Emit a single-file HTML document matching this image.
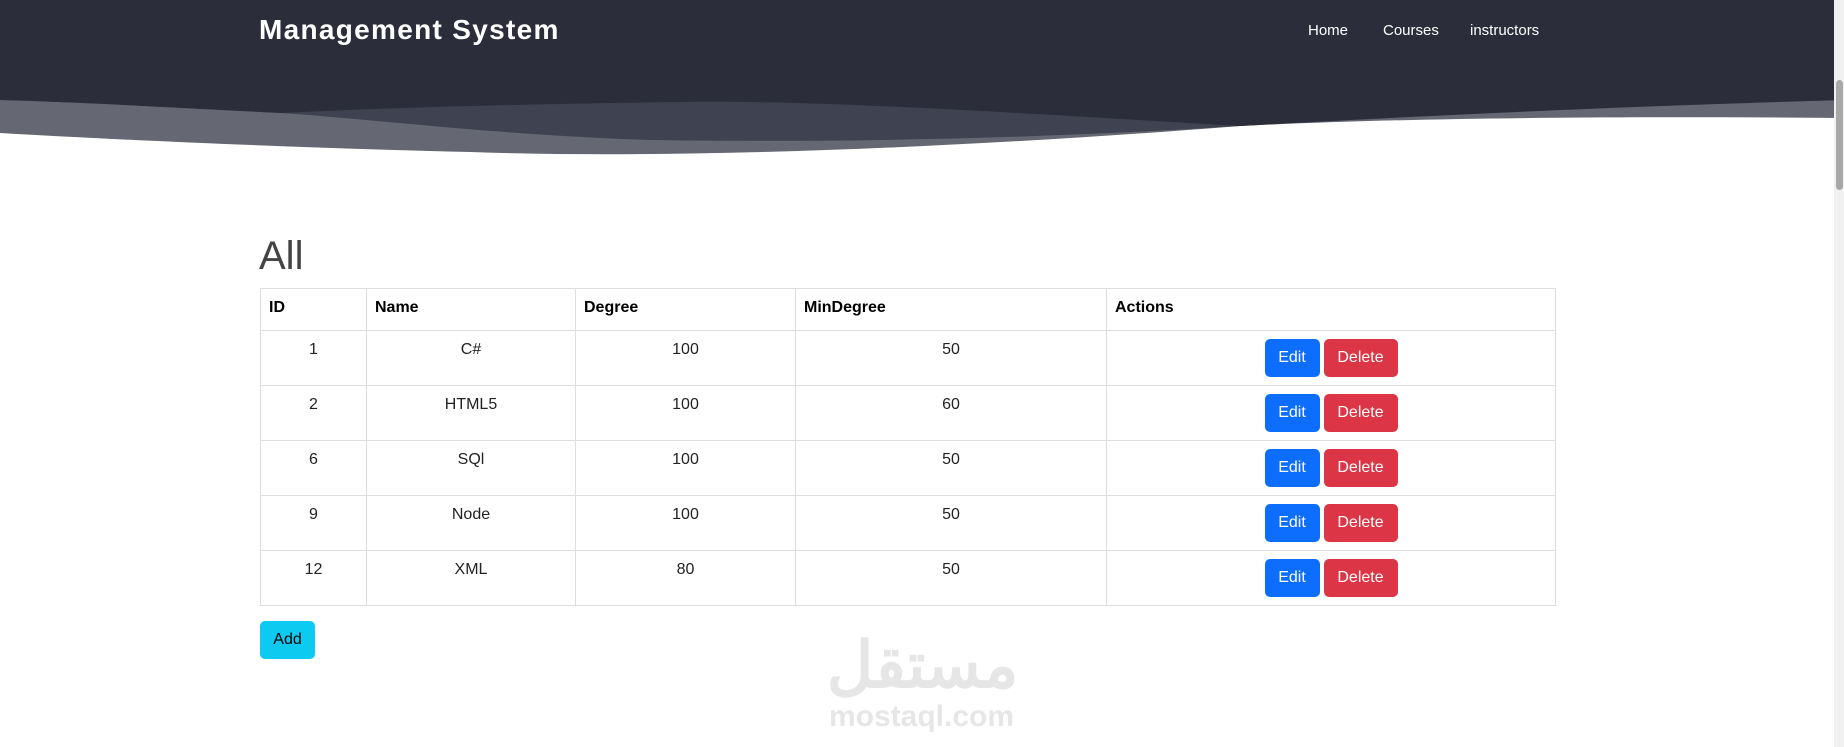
<!DOCTYPE html>
<html><head><meta charset="utf-8"><style>
*{margin:0;padding:0;box-sizing:border-box}
body{width:1844px;height:747px;overflow:hidden;background:#fff;font-family:"Liberation Sans",sans-serif;position:relative}
.abs{position:absolute}
.title{left:259px;top:14px;color:#fff;font-weight:bold;font-size:28px;letter-spacing:1.3px}
.nav{top:22px;color:#fff;font-size:15px}
table{position:absolute;left:260px;top:288px;width:1296px;border-collapse:collapse;font-size:16px;color:#222}
td,th{border:1px solid #dedede;vertical-align:top;padding:10px 8px}
th{text-align:left;font-weight:bold;height:42px;color:#000}
td{text-align:center;height:55px}
.btn{display:inline-block;color:#fff;font-size:16px;border-radius:5px;height:38px;line-height:38px;vertical-align:top}
.e{background:#0d6efd;width:55px}
.d{background:#dc3545;width:74px;margin-left:4px}
td.a{padding-top:8px;padding-bottom:0}
</style></head><body>
<svg class="abs" style="left:0;top:0" width="1844" height="160" viewBox="0 0 1844 160">
<rect width="1844" height="160" fill="#fff"/>
<path d="M0,0H1844V118C1600,116 1400,118 1240,126 C1000,145 700,160 470,152 C300,148 120,140 0,133Z" fill="#656873"/>
<path d="M0,0H1844V100C1600,106 1400,116 1240,126 C1050,138 850,143 650,140 C500,135 380,120 282,113 C180,108 80,102 0,100Z" fill="#3f4250"/>
<path d="M0,0H1844V100C1600,107 1420,116 1240,126 C1000,112 820,100 680,102 C520,104 380,108 282,113 C180,108 80,102 0,100Z" fill="#2b2d3a"/>
</svg>
<div class="abs title">Management System</div>
<div class="abs nav" style="left:1308px">Home</div>
<div class="abs nav" style="left:1383px">Courses</div>
<div class="abs nav" style="left:1470px">instructors</div>
<div class="abs" style="left:1834px;top:0;width:10px;height:747px;background:#f1f1f1"></div>
<div class="abs" style="left:1836px;top:80px;width:7px;height:110px;background:#a8a8a8;border-radius:4px"></div>
<div class="abs" style="left:259px;top:234px;font-size:40px;color:#444;font-weight:300">All</div>
<table>
<tr><th style="width:106px">ID</th><th style="width:209px">Name</th><th style="width:220px">Degree</th><th style="width:311px">MinDegree</th><th>Actions</th></tr>
<tr><td>1</td><td>C#</td><td>100</td><td>50</td><td class="a"><span class="btn e">Edit</span><span class="btn d">Delete</span></td></tr>
<tr><td>2</td><td>HTML5</td><td>100</td><td>60</td><td class="a"><span class="btn e">Edit</span><span class="btn d">Delete</span></td></tr>
<tr><td>6</td><td>SQl</td><td>100</td><td>50</td><td class="a"><span class="btn e">Edit</span><span class="btn d">Delete</span></td></tr>
<tr><td>9</td><td>Node</td><td>100</td><td>50</td><td class="a"><span class="btn e">Edit</span><span class="btn d">Delete</span></td></tr>
<tr><td>12</td><td>XML</td><td>80</td><td>50</td><td class="a"><span class="btn e">Edit</span><span class="btn d">Delete</span></td></tr>
</table>
<div class="abs" style="left:260px;top:621px;width:55px;height:38px;background:#0dcaf0;border-radius:5px;line-height:38px;text-align:center;font-size:16px;color:#000">Add</div>
<div class="abs" style="left:820px;top:630px;width:205px;text-align:center;font-family:'Liberation Sans','Noto Sans CJK SC',sans-serif;font-weight:bold;font-size:64px;color:#e6e6e6;line-height:70px">مستقل</div>
<div class="abs" style="left:825px;top:700px;width:193px;text-align:center;font-weight:bold;font-size:30px;color:#e6e6e6">mostaql.com</div>
</body></html>
